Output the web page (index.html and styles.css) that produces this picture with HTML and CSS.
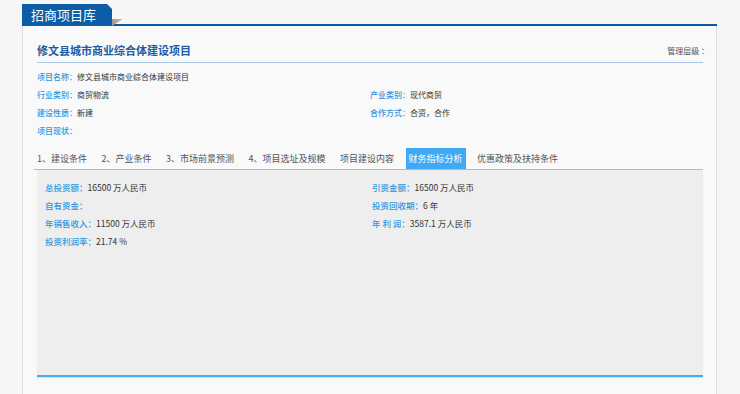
FILE: index.html
```html
<!DOCTYPE html>
<html lang="zh-CN">
<head>
<meta charset="utf-8">
<title>招商项目库</title>
<link rel="stylesheet" href="styles.css">
</head>
<body>
<div class="wrap">
  <div class="head">
    <div class="head-tab">招商项目库</div>
    <div class="head-line"></div>
  </div>
  <div class="panel">
    <div class="title-row">
      <h1 class="title">修文县城市商业综合体建设项目</h1>
      <span class="level">管理层级 ：</span>
    </div>
    <div class="info">
      <div class="row full"><span class="lbl">项目名称：</span><span class="val">修文县城市商业综合体建设项目</span></div>
      <div class="row"><span class="lbl">行业类别：</span><span class="val">商贸物流</span></div>
      <div class="row"><span class="lbl">产业类别：</span><span class="val">现代商贸</span></div>
      <div class="row"><span class="lbl">建设性质：</span><span class="val">新建</span></div>
      <div class="row"><span class="lbl">合作方式：</span><span class="val">合资，合作</span></div>
      <div class="row full"><span class="lbl">项目现状：</span><span class="val"></span></div>
    </div>
    <ul class="tabs">
      <li class="tab">1、建设条件</li>
      <li class="tab">2、产业条件</li>
      <li class="tab">3、市场前景预测</li>
      <li class="tab">4、项目选址及规模</li>
      <li class="tab">项目建设内容</li>
      <li class="tab active">财务指标分析</li>
      <li class="tab">优惠政策及扶持条件</li>
    </ul>
    <div class="finance">
      <div class="frow"><span class="lbl">总投资额：</span><span class="val">16500 万人民币</span></div>
      <div class="frow"><span class="lbl">引资金额：</span><span class="val">16500 万人民币</span></div>
      <div class="frow"><span class="lbl">自有资金：</span><span class="val"></span></div>
      <div class="frow"><span class="lbl">投资回收期：</span><span class="val">6 年</span></div>
      <div class="frow"><span class="lbl">年销售收入：</span><span class="val">11500 万人民币</span></div>
      <div class="frow"><span class="lbl">年 利 润：</span><span class="val">3587.1 万人民币</span></div>
      <div class="frow"><span class="lbl">投资利润率：</span><span class="val">21.74 %</span></div>
    </div>
    <div class="panel-foot"></div>
  </div>
</div>
</body>
</html>
```
FILE: styles.css
```css
* { box-sizing: border-box; }
html, body { margin: 0; padding: 0; }
body {
  background: #f6f6f6;
  font-family: "Noto Sans CJK SC", "Microsoft YaHei", sans-serif;
  color: #333;
}
.wrap {
  width: 695px;
  margin-left: 22px;
  padding-top: 4px;
}
.head {
  display: flex;
  align-items: flex-end;
  height: 22px;
}
.head-tab {
  position: relative;
  width: 90px;
  height: 22px;
  padding-left: 9px;
  background: #0c5da5;
  color: #fff;
  font-size: 13px;
  line-height: 22px;
  clip-path: polygon(0 0, calc(100% - 5px) 0, 100% 5px, 100% 100%, 0 100%);
}
.head-line {
  position: relative;
  flex: 1;
  height: 2px;
  background: #0c5aa0;
}
.head-line::before {
  content: "";
  position: absolute;
  left: 0;
  bottom: 0;
  width: 11px;
  height: 7px;
  background: linear-gradient(90deg, #9a9a9a, #c4c4c4);
  clip-path: polygon(0 0, 100% 0, 0 100%);
}
.panel {
  background: #f9f9f9;
  border-left: 1px solid #e2e2e2;
  border-right: 1px solid #e2e2e2;
  padding: 0 13px 20px 14px;
}
.title-row {
  display: flex;
  justify-content: space-between;
  align-items: center;
  padding-top: 16px;
  padding-bottom: 4px;
  border-bottom: 1px solid #a9c5e4;
}
.title {
  margin: 0;
  font-size: 11px;
  line-height: 16px;
  font-weight: bold;
  color: #1d5ca5;
}
.level {
  font-size: 8px;
  color: #555;
  margin-right: -6px;
}
.info {
  display: grid;
  grid-template-columns: 333px 1fr;
  padding-top: 5px;
}
.row {
  height: 18px;
  line-height: 18px;
  font-size: 8px;
  white-space: nowrap;
}
.row.full { grid-column: 1 / -1; }
.lbl { color: #2f96e0; font-weight: 500; }
.val { color: #333; }
.tabs {
  list-style: none;
  margin: 8px 0 0 -3px;
  padding: 0;
  display: flex;
  gap: 8.5px;
  border-bottom: 1px solid #8fc6f0;
}
.tab {
  height: 21px;
  line-height: 21px;
  padding: 0 3px;
  font-size: 9px;
  color: #555;
  white-space: nowrap;
}
.tab.active {
  background: #40a9f4;
  color: #fff;
}
.finance {
  display: grid;
  grid-template-columns: 327px 1fr;
  align-content: start;
  height: 207px;
  padding: 8px 0 0 8px;
  background: #eeeeee;
  border-bottom: 2px solid #46acf1;
  box-shadow: 0 1px 0 #c6e4fa;
}
.frow {
  height: 18px;
  line-height: 18px;
  font-size: 8.5px;
  white-space: nowrap;
}
.panel-foot { height: 20px; }
```
